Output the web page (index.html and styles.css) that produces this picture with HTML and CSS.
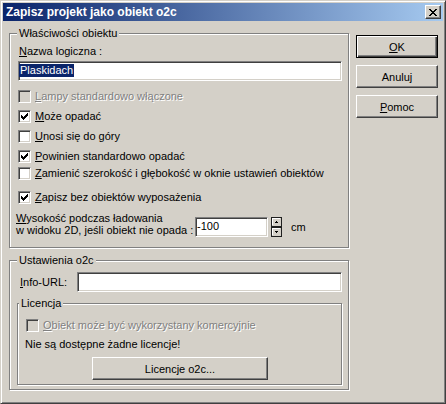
FILE: index.html
```html
<!DOCTYPE html>
<html lang="pl">
<head>
    <meta charset="UTF-8">
    <title>Zapisz projekt jako obiekt o2c</title>
    <link rel="stylesheet" href="styles.css">
</head>
<body>
<div class="window">
    <div class="caption">
        <span class="caption-text">Zapisz projekt jako obiekt o2c</span>
        <span class="caption-btn">
            <svg width="8" height="7" viewBox="0 0 8 7" shape-rendering="crispEdges">
                <path d="M0 0h2v1h-2zM6 0h2v1h-2zM1 1h2v1h-2zM5 1h2v1h-2zM2 2h4v1h-4zM3 3h2v1h-2zM2 4h4v1h-4zM1 5h2v1h-2zM5 5h2v1h-2zM0 6h2v1h-2zM6 6h2v1h-2z" fill="#000"/>
            </svg>
        </span>
    </div>

    <div class="client">
        <div class="main">
            <div class="group props">
                <div class="group-title">Właściwości obiektu</div>
                <div class="name-label"><u>N</u>azwa logiczna :</div>
                <div class="edit name-edit"><span class="sel">Plaskidach</span></div>

                <div class="check disabled row-first"><span class="box"></span><span><u>L</u>ampy standardowo włączone</span></div>
                <div class="check"><span class="box"><svg class="tick" width="7" height="7" viewBox="0 0 7 7" shape-rendering="crispEdges"><path d="M6 0h1v1h-1zM5 1h2v1h-2zM0 2h1v1h-1zM4 2h3v1h-3zM0 3h2v1h-2zM3 3h3v1h-3zM0 4h5v1h-5zM1 5h3v1h-3zM2 6h1v1h-1z"/></svg></span><span><u>M</u>oże opadać</span></div>
                <div class="check"><span class="box"></span><span><u>U</u>nosi się do góry</span></div>
                <div class="check"><span class="box"><svg class="tick" width="7" height="7" viewBox="0 0 7 7" shape-rendering="crispEdges"><path d="M6 0h1v1h-1zM5 1h2v1h-2zM0 2h1v1h-1zM4 2h3v1h-3zM0 3h2v1h-2zM3 3h3v1h-3zM0 4h5v1h-5zM1 5h3v1h-3zM2 6h1v1h-1z"/></svg></span><span><u>P</u>owinien standardowo opadać</span></div>
                <div class="check row-swap"><span class="box"></span><span><u>Z</u>amienić szerokość i głębokość w oknie ustawień obiektów</span></div>
                <div class="check row-save"><span class="box"><svg class="tick" width="7" height="7" viewBox="0 0 7 7" shape-rendering="crispEdges"><path d="M6 0h1v1h-1zM5 1h2v1h-2zM0 2h1v1h-1zM4 2h3v1h-3zM0 3h2v1h-2zM3 3h3v1h-3zM0 4h5v1h-5zM1 5h3v1h-3zM2 6h1v1h-1z"/></svg></span><span><u>Z</u>apisz bez obiektów wyposażenia</span></div>

                <div class="height-row">
                    <div class="height-label"><u>W</u>ysokość podczas ładowania<br>w widoku 2D, jeśli obiekt nie opada :</div>
                    <div class="edit height-edit">-100</div>
                    <svg class="spin" width="11" height="20" viewBox="0 0 11 20" shape-rendering="crispEdges">
                        <rect x="0" y="0" width="11" height="20" fill="#202020"/>
                        <rect x="1" y="1" width="9" height="8" fill="#d4d0c8"/>
                        <rect x="1" y="11" width="9" height="8" fill="#d4d0c8"/>
                        <path d="M1 1h8v1h-8zM1 1h1v7h-1zM1 11h8v1h-8zM1 11h1v7h-1z" fill="#fff"/>
                        <path d="M5 4h1v1h-1zM4 5h3v1h-3zM4 14h3v1h-3zM5 15h1v1h-1z" fill="#000"/>
                    </svg>
                    <div class="unit">cm</div>
                </div>
            </div>

            <div class="group o2c">
                <div class="group-title">Ustawienia o2c</div>
                <div class="info-row">
                    <div class="info-label"><u>I</u>nfo-URL:</div>
                    <div class="edit info-edit"></div>
                </div>

                <div class="group licence">
                    <div class="group-title">Licencja</div>
                    <div class="check disabled row-commercial"><span class="box"></span><span><u>O</u>biekt może być wykorzystany komercyjnie</span></div>
                    <div class="licence-note">Nie są dostępne żadne licencje!</div>
                    <div class="btn licence-btn">Licencje o2c...</div>
                </div>
            </div>
        </div>

        <div class="buttons">
            <div class="btn default"><u>O</u>K</div>
            <div class="btn">Anuluj</div>
            <div class="btn"><u>P</u>omoc</div>
        </div>
    </div>
</div>
</body>
</html>
```

FILE: styles.css
```css
body {
    margin: 0;
    background: #d4d0c8;
    font-family: "Liberation Sans", Arial, sans-serif;
    font-size: 11px;
    color: #000;
}
u { text-underline-offset: 1px; }

/* window frame */
.window {
    width: 446px;
    height: 404px;
    box-sizing: border-box;
    padding: 2px;
    border: 1px solid;
    border-color: #d4d0c8 #404040 #404040 #d4d0c8;
    box-shadow: inset 1px 1px 0 #fff, inset -1px -1px 0 #808080;
    background: #d4d0c8;
}
.caption {
    height: 18px;
    display: flex;
    align-items: center;
    justify-content: space-between;
    padding: 0 2px 0 3px;
    background: linear-gradient(to right, #0a246a, #a6caf0);
}
.caption-text {
    color: #fff;
    font-weight: bold;
    font-size: 12px;
    line-height: 18px;
}
.caption-btn {
    width: 16px;
    height: 14px;
    box-sizing: border-box;
    display: flex;
    align-items: center;
    justify-content: center;
    border: 1px solid;
    border-color: #fff #404040 #404040 #fff;
    box-shadow: inset -1px -1px 0 #808080;
    background: #d4d0c8;
}

.client {
    display: flex;
    gap: 7px;
    padding: 12px 0 0 6px;
}
.main { width: 340px; }

/* group boxes */
.group {
    border: 1px solid #808080;
    box-shadow: inset 1px 1px 0 #fff, 1px 1px 0 #fff;
}
.group-title {
    display: table;
    margin-top: -7px;
    padding: 0 2px;
    line-height: 13px;
    background: #d4d0c8;
}
.props { padding: 0 6px 10px 8px; }
.props > .group-title { margin-left: -1px; }
.o2c { margin-top: 12px; padding: 0 6px 4px 7px; }
.licence { margin-top: 11px; padding: 0 6px 4px 7px; }
.licence > .group-title { margin-left: -6px; }

/* edits */
.edit {
    box-sizing: border-box;
    height: 20px;
    border: 1px solid;
    border-color: #808080 #fff #fff #808080;
    box-shadow: inset 1px 1px 0 #404040, inset -1px -1px 0 #d4d0c8;
    background: #fff;
}
.name-label { margin: 5px 0 0 1px; line-height: 13px; }
.name-edit { margin-top: 3px; padding-top: 2px; line-height: 13px; }
.sel {
    display: inline-block;
    padding: 0 1px;
    background: #0a246a;
    color: #fff;
}

/* checkboxes */
.check {
    display: flex;
    align-items: center;
    gap: 4px;
    height: 13px;
    line-height: 13px;
    margin-top: 7px;
    white-space: nowrap;
}
.box {
    width: 13px;
    height: 13px;
    box-sizing: border-box;
    flex: none;
    display: flex;
    align-items: center;
    justify-content: center;
    border: 1px solid;
    border-color: #808080 #fff #fff #808080;
    box-shadow: inset 1px 1px 0 #404040, inset -1px -1px 0 #d4d0c8;
    background: #fff;
}
.tick { fill: #000; }
.disabled { color: #808080; text-shadow: 1px 1px 0 #fff; }
.disabled .box { background: #d4d0c8; }
.row-first { margin-top: 9px; }
.row-swap { margin-top: 4px; }
.row-save { margin-top: 11px; }
.row-commercial { margin: 9px 0 0 1px; }

/* height row */
.height-row {
    display: flex;
    align-items: flex-start;
    margin: 8px 0 0 -2px;
}
.height-label { width: 179px; line-height: 12px; white-space: nowrap; }
.height-edit {
    width: 73px;
    margin-top: 5px;
    padding-left: 1px;
    line-height: 17px;
}
.spin { margin: 5px 0 0 3px; }
.unit { margin: 5px 0 0 9px; line-height: 20px; }

/* o2c */
.info-row {
    display: flex;
    align-items: center;
    margin: 5px 0 0 3px;
}
.info-label { width: 57px; }
.info-edit { flex: 1; }
.licence-note { margin-top: 6px; line-height: 13px; }

/* buttons */
.btn {
    box-sizing: border-box;
    height: 23px;
    display: flex;
    align-items: center;
    justify-content: center;
    border: 1px solid;
    border-color: #fff #404040 #404040 #fff;
    box-shadow: inset -1px -1px 0 #808080;
    background: #d4d0c8;
}
.btn.default {
    border: 1px solid #000;
    box-shadow: inset 1px 1px 0 #fff, inset -1px -1px 0 #404040, inset -2px -2px 0 #808080;
}
.licence-btn { width: 176px; margin: 6px 0 0 67px; }
.buttons {
    width: 82px;
    display: flex;
    flex-direction: column;
    gap: 7px;
    padding-top: 2px;
}
```
